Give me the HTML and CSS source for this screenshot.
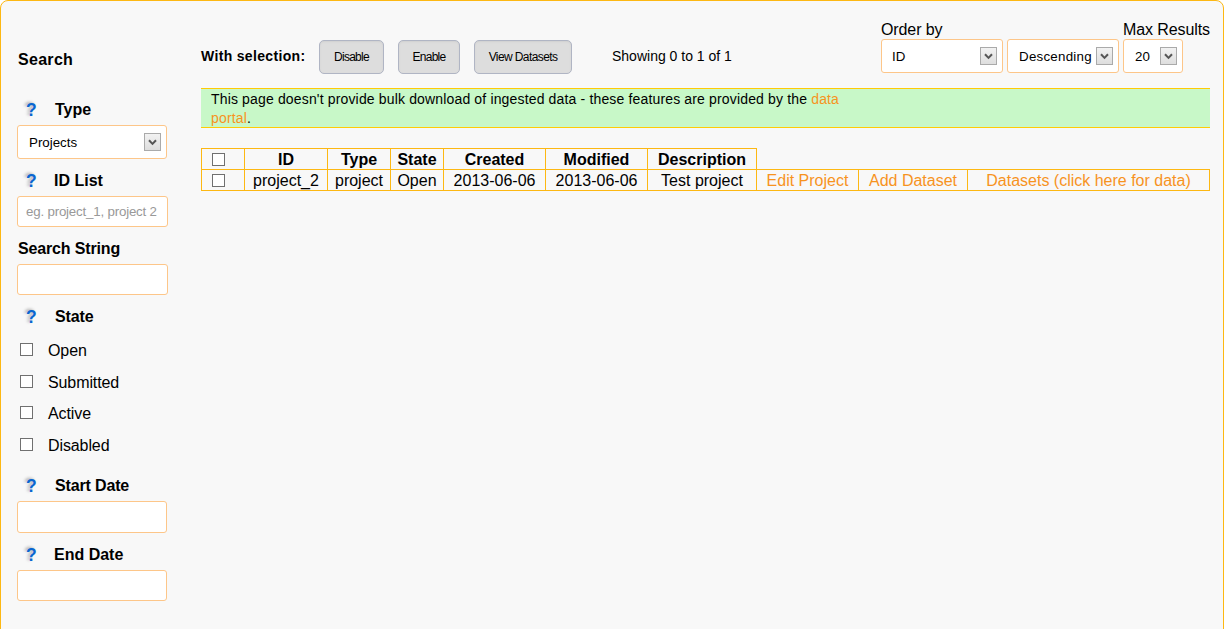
FILE: index.html
```
<!DOCTYPE html>
<html lang="en">
<head>
<meta charset="utf-8">
<title>Project search</title>
<link rel="stylesheet" href="styles.css">
</head>
<body>
<div class="panel">
  <form class="sidebar">
    <h2 class="search-title">Search</h2>
    <div class="field field-type">
      <div class="label"><span class="help">?</span><b>Type</b></div>
      <div class="select select-type"><span>Projects</span><i class="arrow"><svg width="9" height="7" viewBox="0 0 9 7"><path d="M1 1.2L4.5 4.9L8 1.2"/></svg></i></div>
    </div>
    <div class="field field-ids">
      <div class="label"><span class="help">?</span><b class="t-left">ID List</b></div>
      <input class="input" type="text" placeholder="eg. project_1, project 2">
    </div>
    <div class="field field-string">
      <div class="label"><b class="t-string">Search String</b></div>
      <input class="input" type="text">
    </div>
    <div class="label label-state"><span class="help">?</span><b class="t-tight">State</b></div>
    <div class="states">
      <div class="state"><i class="check"></i><span>Open</span></div>
      <div class="state"><i class="check"></i><span>Submitted</span></div>
      <div class="state"><i class="check"></i><span>Active</span></div>
      <div class="state"><i class="check"></i><span>Disabled</span></div>
    </div>
    <div class="field field-start">
      <div class="label"><span class="help">?</span><b class="t-tight">Start Date</b></div>
      <input class="input date tall" type="text">
    </div>
    <div class="field field-end">
      <div class="label"><span class="help">?</span><b class="t-left">End Date</b></div>
      <input class="input date" type="text">
    </div>
  </form>
  <main class="main">
    <div class="toolbar">
      <div class="actions">
        <b class="with">With selection:</b>
        <button class="btn b-disable" type="button"><span>Disable</span></button>
        <button class="btn b-enable" type="button"><span>Enable</span></button>
        <button class="btn b-view" type="button"><span>View Datasets</span></button>
        <span class="showing">Showing 0 to 1 of 1</span>
      </div>
      <div class="sort">
        <div class="group">
          <span class="caption">Order by</span>
          <div class="pair">
            <div class="select s-id"><span>ID</span><i class="arrow"><svg width="9" height="7" viewBox="0 0 9 7"><path d="M1 1.2L4.5 4.9L8 1.2"/></svg></i></div>
            <div class="select s-desc"><span>Descending</span><i class="arrow"><svg width="9" height="7" viewBox="0 0 9 7"><path d="M1 1.2L4.5 4.9L8 1.2"/></svg></i></div>
          </div>
        </div>
        <div class="group">
          <span class="caption">Max Results</span>
          <div class="select s-max"><span>20</span><i class="arrow"><svg width="9" height="7" viewBox="0 0 9 7"><path d="M1 1.2L4.5 4.9L8 1.2"/></svg></i></div>
        </div>
      </div>
    </div>
    <div class="notice"><p>This page doesn't provide bulk download of ingested data - these features are provided by the <a>data</a><br><a>portal</a>.</p></div>
    <table class="results">
      <colgroup><col class="c1"><col class="c2"><col class="c3"><col class="c4"><col class="c5"><col class="c5"><col class="c7"><col class="c8"><col class="c9"><col class="c10"></colgroup>
      <tr><th class="pick"><i class="check"></i></th><th>ID</th><th>Type</th><th>State</th><th>Created</th><th>Modified</th><th>Description</th></tr>
      <tr><td class="pick"><i class="check"></i></td><td>project_2</td><td>project</td><td>Open</td><td>2013-06-06</td><td>2013-06-06</td><td>Test project</td><td><a>Edit Project</a></td><td><a>Add Dataset</a></td><td><a>Datasets (click here for data)</a></td></tr>
    </table>
  </main>
</div>
</body>
</html>
```
FILE: styles.css
```
* { box-sizing: border-box; }
body { margin: 0; height: 629px; overflow: hidden; background: #fff; color: #000; font: 16px/18px "Liberation Sans", Arial, sans-serif; }
.panel { display: flex; height: 660px; padding: 0 13px 0 16px; background: #f8f8f8; border: 1px solid #fdb813; border-radius: 8px; }
a { color: #f7931e; }

.sidebar { width: 184px; padding-top: 50px; }
.search-title { margin: 0 0 32px 1px; font-size: 16px; line-height: 18px; letter-spacing: 0.3px; }
.label { display: flex; height: 18px; padding-left: 1px; white-space: nowrap; }
.help { width: 37px; padding-left: 8px; font-size: 17.5px; line-height: 19px; font-weight: bold; color: #0a66d0; text-shadow: -2px -1px 3px #aaa; }
.t-left { margin-left: -1px; }
.t-tight { letter-spacing: -0.15px; }
.t-string { letter-spacing: -0.15px; }
.field .input, .field .select { margin-top: 6px; }
.input { display: block; width: 151px; height: 31px; padding: 0 6px 0 8px; background: #fff; border: 1px solid #fdc689; border-radius: 3px; font: 13.33px "Liberation Sans", Arial, sans-serif; letter-spacing: -0.2px; }
.input::placeholder { color: #999; opacity: 1; }
.date { width: 150px; }
.tall { height: 32px; }
.select { display: flex; align-items: center; justify-content: space-between; height: 34px; padding: 0 5px 0 11px; background: #fff; border: 1px solid #fdc689; border-radius: 3px; font-size: 13.33px; }
.select span { padding-top: 2px; }
.select-type { width: 150px; }
.arrow { display: flex; align-items: center; justify-content: center; width: 17px; height: 18px; background: linear-gradient(#f2f2f2, #dedede); border: 1px solid #aaa; }
.arrow path { fill: none; stroke: #555; stroke-width: 2; }
.field-type, .field-ids, .field-string { margin-bottom: 13px; }
.states { height: 134px; margin-top: 16px; }
.state { display: flex; align-items: center; gap: 15px; height: 18px; margin: 0 0 13.67px 3px; }
.check { display: block; width: 13px; height: 13px; background: #fff; border: 1px solid #707070; }
.state .check { margin-top: -3px; }
.state span { letter-spacing: -0.1px; }
.field-start { margin: 1px 0 13px; }

.main { width: 1009px; padding-top: 20px; }
.toolbar { display: flex; justify-content: space-between; height: 67px; font-size: 14px; }
.actions { display: flex; align-items: center; height: 34px; margin-top: 19px; white-space: nowrap; }
.with { width: 118px; padding-bottom: 2px; letter-spacing: 0.33px; }
.showing { padding-bottom: 2px; }
.btn { display: flex; align-items: center; justify-content: center; height: 34px; padding: 0; background: #ddd; border: 1px solid #b0b5c4; border-radius: 5px; box-shadow: inset 0 1px 2px #d0d0d0; color: #000; font: 12px "Liberation Sans", Arial, sans-serif; letter-spacing: -0.6px; }
.b-disable { width: 65px; margin-right: 14px; letter-spacing: -0.75px; }
.b-enable { width: 62px; margin-right: 14px; letter-spacing: -0.75px; }
.b-view { width: 98px; margin-right: 40px; }
.sort { display: flex; gap: 4px; width: 329px; }
.caption { display: block; height: 18px; font-size: 16px; letter-spacing: -0.1px; white-space: nowrap; }
.pair { display: flex; gap: 4px; }
.s-id { width: 122px; padding-left: 10px; }
.s-desc { width: 112px; letter-spacing: 0.25px; }
.s-max { width: 60px; }
.notice { height: 40px; padding: 1px 10px; background: #c8f8c8; border: 1px solid #ffcb05; border-width: 1px 0; font-size: 14px; line-height: 19px; letter-spacing: 0.155px; }
.notice p { margin: 0; }

.results { width: 1009px; margin-top: 20px; border-collapse: collapse; table-layout: fixed; }
.results th, .results td { height: 21px; padding: 2px 0 0; border: 1px solid #fdb813; text-align: center; white-space: nowrap; line-height: 18px; }
.results .pick { padding: 0; }
.results .check { margin-left: 10px; }
.c1 { width: 43px; }
.c2 { width: 83px; }
.c3 { width: 63px; }
.c4 { width: 53px; }
.c5 { width: 102px; }
.c7 { width: 109px; }
.c8 { width: 102px; }
.c9 { width: 109px; }
.c10 { width: 242px; }
```
